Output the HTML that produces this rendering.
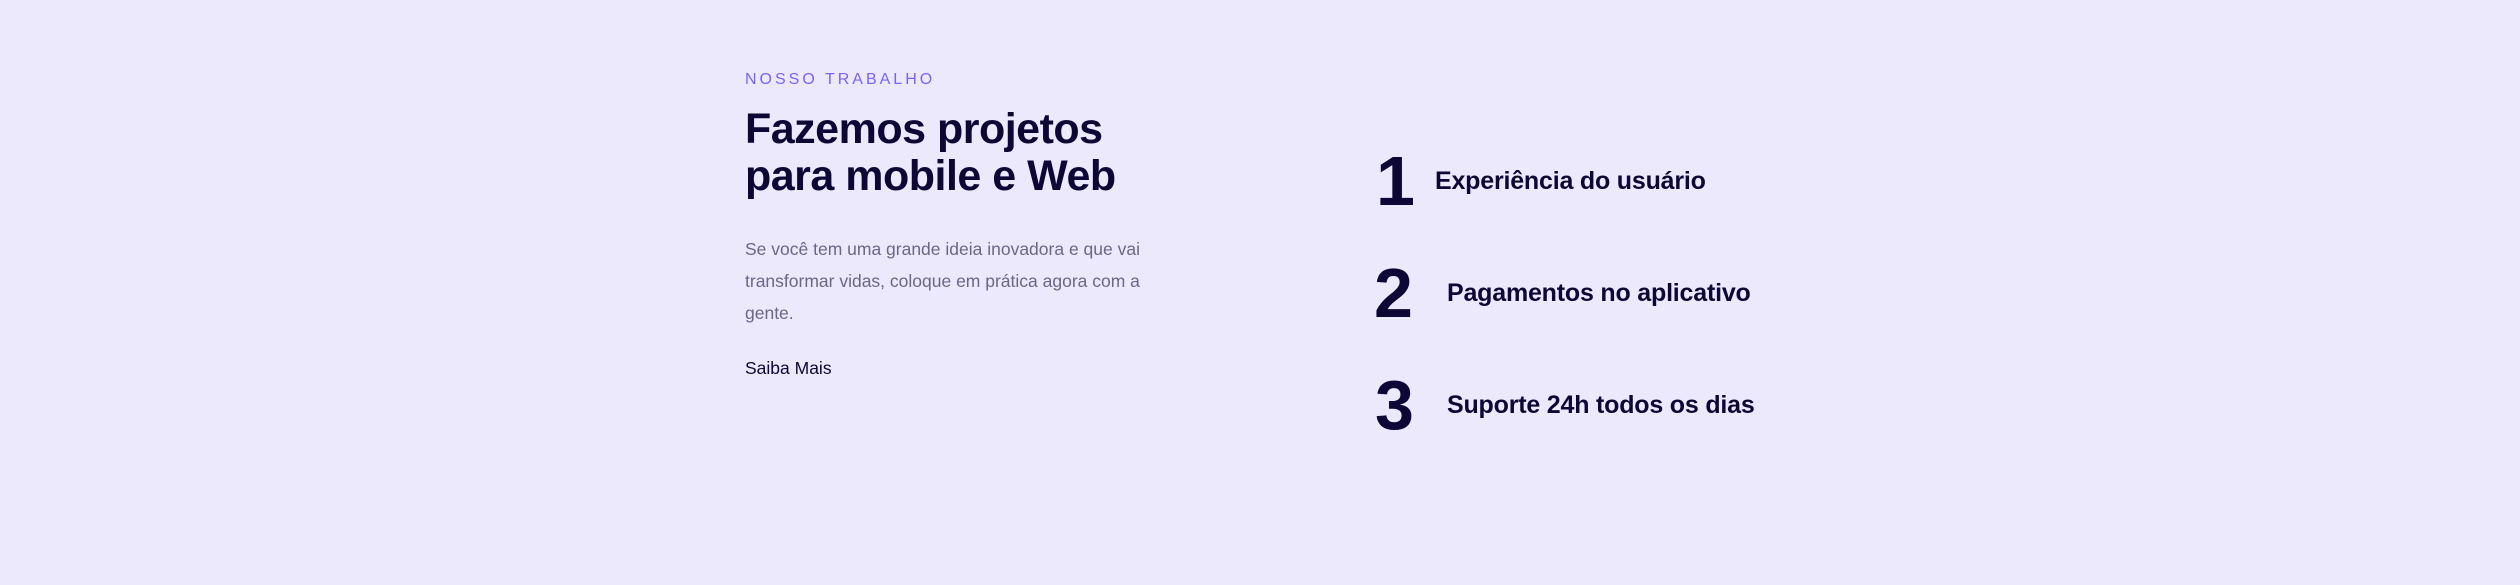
<!DOCTYPE html>
<html><head><meta charset="utf-8"><style>
html,body{margin:0;padding:0;}
body{width:2520px;height:585px;background:#ede9fc;position:relative;overflow:hidden;font-family:"Liberation Sans",sans-serif;color:#0d0736;}
.a{position:absolute;white-space:nowrap;}
.lab{left:745px;top:71px;font-size:16px;letter-spacing:3px;color:#7b62f5;}
.h{left:745px;top:106px;font-size:43px;font-weight:bold;line-height:47px;letter-spacing:-0.5px;}
.p{left:745px;top:233px;font-size:17.5px;line-height:32px;color:#6b6688;}
.s{left:745px;top:358px;font-size:17.5px;}
.n{font-size:70px;font-weight:bold;line-height:1;}
.t{font-size:25px;font-weight:bold;letter-spacing:-0.2px;}
</style></head><body>
<div class="a lab">NOSSO TRABALHO</div>
<div class="a h">Fazemos projetos<br>para mobile e Web</div>
<div class="a p">Se você tem uma grande ideia inovadora e que vai<br>transformar vidas, coloque em prática agora com a<br>gente.</div>
<div class="a s">Saiba Mais</div>
<div class="a n" style="left:1376px;top:146px">1</div>
<div class="a t" style="left:1435px;top:167px">Experiência do usuário</div>
<div class="a n" style="left:1374px;top:258px">2</div>
<div class="a t" style="left:1447px;top:279px">Pagamentos no aplicativo</div>
<div class="a n" style="left:1375px;top:370px">3</div>
<div class="a t" style="left:1447px;top:391px">Suporte 24h todos os dias</div>
</body></html>
